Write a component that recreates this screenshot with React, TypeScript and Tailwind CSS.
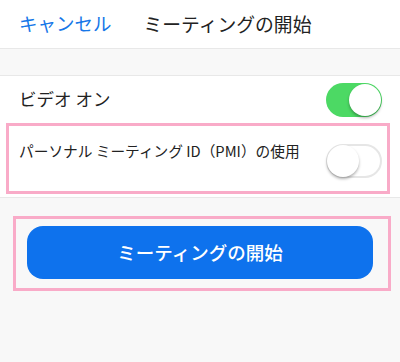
import React from "react";

type ToggleProps = { on: boolean };

function Toggle({ on }: ToggleProps) {
  return (
    <div
      className={`relative w-[56px] h-[34px] rounded-full ${
        on ? "bg-[#4cd964]" : "bg-white border-2 border-[#e6e6e6]"
      }`}
    >
      <div
        className={`absolute top-1/2 -translate-y-1/2 w-[32px] h-[32px] rounded-full bg-white shadow-[0_2px_3px_rgba(0,0,0,0.3)] ${
          on ? "right-[1px]" : "left-[-1px]"
        }`}
      />
    </div>
  );
}

export default function App() {
  return (
    <div
      className="w-[400px] h-[362px] bg-[#f8f8f8] overflow-hidden text-[#222]"
      style={{ fontFamily: '"Noto Sans CJK JP", "Noto Sans", sans-serif' }}
    >
      {/* Header */}
      <div className="h-[49px] bg-white border-b border-[#e8e8e8] flex items-center pl-[19px]">
        <span className="text-[18.5px] text-[#1677e8]">キャンセル</span>
        <span className="ml-[32px] text-[18.8px]">ミーティングの開始</span>
      </div>

      {/* spacer */}
      <div className="h-[26px]" />

      {/* Settings list */}
      <div className="bg-white border-t border-b border-[#e8e8e8]">
        <div className="h-[47px] flex items-center justify-between pl-[19px] pr-[18px]">
          <span className="text-[17.5px]">ビデオ オン</span>
          <Toggle on />
        </div>
        <div className="pl-[6px] pr-[10px] pb-[3px]">
          <div className="h-[71px] border-[3px] border-[#f9abc8] flex items-start justify-between pl-[10px] pr-[5px]">
            <span className="mt-[14px] text-[14.7px]">
              パーソナル ミーティング ID（PMI）の使用
            </span>
            <div className="mt-[18px]">
              <Toggle on={false} />
            </div>
          </div>
        </div>
      </div>

      {/* Start button */}
      <div className="pt-[18px] pl-[13px] pr-[9px]">
        <div className="border-[3px] border-[#f9abc8] pl-[11px] pr-[15px] pt-[7px] pb-[9px]">
          <button className="w-full h-[53px] rounded-[16px] bg-[#0e72ed] text-white text-[18.5px] font-medium">
            ミーティングの開始
          </button>
        </div>
      </div>
    </div>
  );
}
